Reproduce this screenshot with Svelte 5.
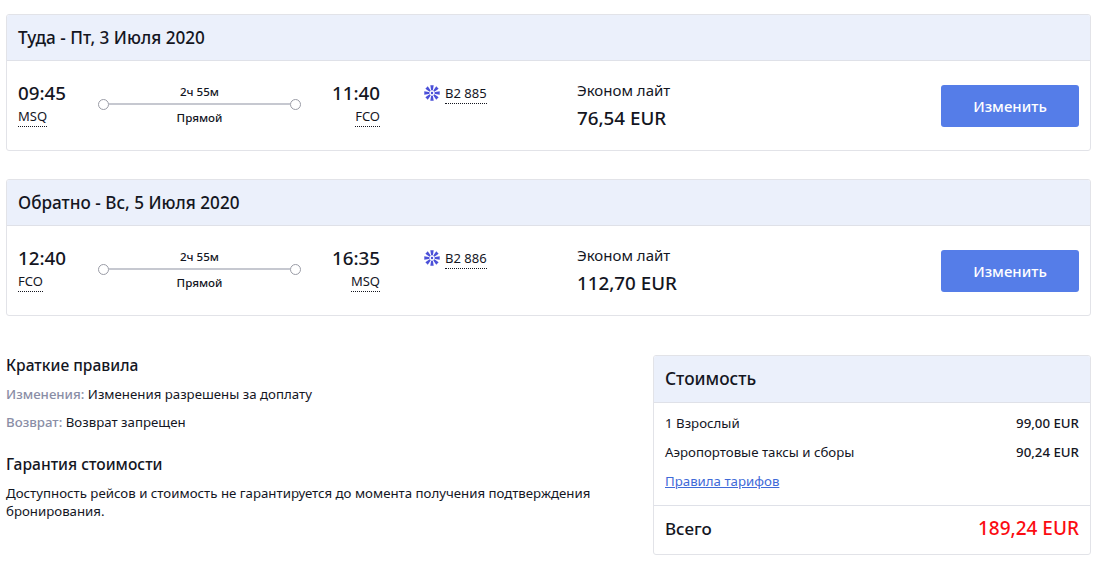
<script lang="ts">
	const flights = [
		{
			title: 'Туда - Пт, 3 Июля 2020',
			depTime: '09:45', depCode: 'MSQ',
			arrTime: '11:40', arrCode: 'FCO',
			number: 'B2 885', fare: 'Эконом лайт', price: '76,54 EUR',
		},
		{
			title: 'Обратно - Вс, 5 Июля 2020',
			depTime: '12:40', depCode: 'FCO',
			arrTime: '16:35', arrCode: 'MSQ',
			number: 'B2 886', fare: 'Эконом лайт', price: '112,70 EUR',
		},
	];
	const petals = [0, 45, 90, 135, 180, 225, 270, 315];
</script>

<div class="page">
	{#each flights as f}
		<section class="card flight">
			<header class="card-head"><h2>{f.title}</h2></header>
			<div class="flight-body">
				<div class="point">
					<div class="time">{f.depTime}</div>
					<span class="code">{f.depCode}</span>
				</div>
				<div class="route">
					<div class="duration">2ч 55м</div>
					<div class="line"><i></i><b></b><i></i></div>
					<div class="stops">Прямой</div>
				</div>
				<div class="point right">
					<div class="time">{f.arrTime}</div>
					<span class="code">{f.arrCode}</span>
				</div>
				<div class="carrier">
					<svg width="16" height="16" viewBox="0 0 16 16" aria-hidden="true">
						{#each petals as a}
							<path d="M6.3 0.3h3.4l-0.7 4.3a1 1 0 0 1-2 0z" transform="rotate({a} 8 8)" />
						{/each}
						<circle cx="8" cy="8" r="1.2" />
					</svg>
					<span class="number">{f.number}</span>
				</div>
				<div class="fare">
					<div class="fare-name">{f.fare}</div>
					<div class="fare-price">{f.price}</div>
				</div>
				<button class="change">Изменить</button>
			</div>
		</section>
	{/each}

	<div class="bottom">
		<div class="rules">
			<h3>Краткие правила</h3>
			<p><span class="label">Изменения:</span> Изменения разрешены за доплату</p>
			<p><span class="label">Возврат:</span> Возврат запрещен</p>
			<h3 class="second">Гарантия стоимости</h3>
			<p class="note">Доступность рейсов и стоимость не гарантируется до момента получения подтверждения бронирования.</p>
		</div>
		<section class="card cost">
			<header class="card-head"><h2>Стоимость</h2></header>
			<div class="cost-rows">
				<div class="row"><span>1 Взрослый</span><strong>99,00 EUR</strong></div>
				<div class="row"><span>Аэропортовые таксы и сборы</span><strong>90,24 EUR</strong></div>
				<a href="#rules">Правила тарифов</a>
			</div>
			<div class="total"><span>Всего</span><span class="sum">189,24 EUR</span></div>
		</section>
	</div>
</div>

<style>
	:global(body) {
		margin: 0;
		background: #fff;
		font-family: "Noto Sans", "Open Sans", sans-serif;
		color: #14161f;
	}

	.page {
		padding: 14px 9px 0 6px;
	}

	.card {
		border: 1px solid #e2e3e8;
		border-radius: 3px;
		background: #fff;
		overflow: hidden;
	}

	.card-head {
		height: 45px;
		display: flex;
		align-items: center;
		padding: 0 11px;
		background: #ebf0fb;
		border-bottom: 1px solid #dfe1e8;
	}

	h2 {
		margin: 0;
		font-size: 17.15px;
		font-weight: 500;
	}

	.flight {
		margin-bottom: 28px;
	}

	.flight-body {
		height: 89px;
		display: flex;
		align-items: flex-start;
		padding-left: 11px;
	}

	.point {
		width: 60px;
		padding-top: 22px;
	}

	.point.right {
		text-align: right;
		width: 48px;
	}

	.time {
		font-size: 18.8px;
		font-weight: 500;
		line-height: 21px;
	}

	.code, .number {
		font-size: 13px;
		line-height: 16px;
		padding-bottom: 2px;
		display: inline-block;
		border-bottom: 1px dotted #14161f;
	}

	.route {
		width: 203px;
		margin: 0 31px 0 20px;
		padding-top: 24px;
		text-align: center;
		font-size: 11.6px;
		font-weight: 500;
	}

	.duration {
		line-height: 14px;
	}

	.stops {
		line-height: 16px;
		margin-top: 1px;
	}

	.line {
		display: flex;
		align-items: center;
		height: 10px;
	}

	.line i {
		width: 9px;
		height: 9px;
		border: 1px solid #9a9ca6;
		border-radius: 50%;
		background: #fff;
	}

	.line b {
		flex: 1;
		height: 2px;
		background: #c6c8d0;
	}

	.carrier {
		display: flex;
		align-items: center;
		gap: 5px;
		width: 153px;
		margin-left: 44px;
		padding-top: 24px;
	}

	.carrier svg {
		fill: #4b50d8;
		flex: none;
		margin-bottom: 3px;
	}

	.fare {
		padding-top: 18px;
		width: 364px;
	}

	.fare-name {
		font-size: 15px;
		line-height: 22px;
	}

	.fare-price {
		font-size: 18.8px;
		font-weight: 500;
		line-height: 26px;
		margin-top: 4px;
	}

	.change {
		width: 138px;
		height: 42px;
		margin-top: 24px;
		border: none;
		border-radius: 3px;
		background: #557de8;
		color: #fff;
		font: inherit;
		font-size: 15px;
		font-weight: 500;
	}

	.bottom {
		display: flex;
		justify-content: space-between;
		align-items: flex-start;
		margin-top: 38px;
	}

	.rules {
		width: 600px;
	}

	h3 {
		margin: 0;
		font-size: 15.6px;
		font-weight: 500;
		line-height: 22px;
	}

	.rules p {
		margin: 8px 0 0;
		line-height: 21px;
		font-size: 13.25px;
	}

	.rules p + p {
		margin-top: 7px;
	}

	.label {
		color: #8a8ea6;
		font-weight: 500;
	}

	.second {
		margin-top: 20px;
	}

	.rules .note {
		line-height: 18px;
		margin-top: 9px;
	}

	.cost {
		width: 436px;
		margin-top: 1px;
	}

	.cost h2 {
		font-size: 17.3px;
	}

	.cost .card-head {
		height: 47px;
		box-sizing: border-box;
		padding-bottom: 2px;
	}

	.cost-rows {
		padding: 10px 11px 14px;
		font-size: 13.25px;
		border-bottom: 1px solid #dfe1e8;
	}

	.row {
		display: flex;
		justify-content: space-between;
		line-height: 20px;
		margin-bottom: 9px;
	}

	.row strong {
		font-weight: 500;
	}

	a {
		color: #3f6ad8;
		line-height: 20px;
		display: inline-block;
	}

	.total {
		display: flex;
		justify-content: space-between;
		align-items: center;
		height: 48px;
		box-sizing: border-box;
		padding: 0 11px 4px;
		font-size: 17px;
		font-weight: 500;
	}

	.sum {
		color: #fb0c12;
		font-size: 19px;
	}
</style>
